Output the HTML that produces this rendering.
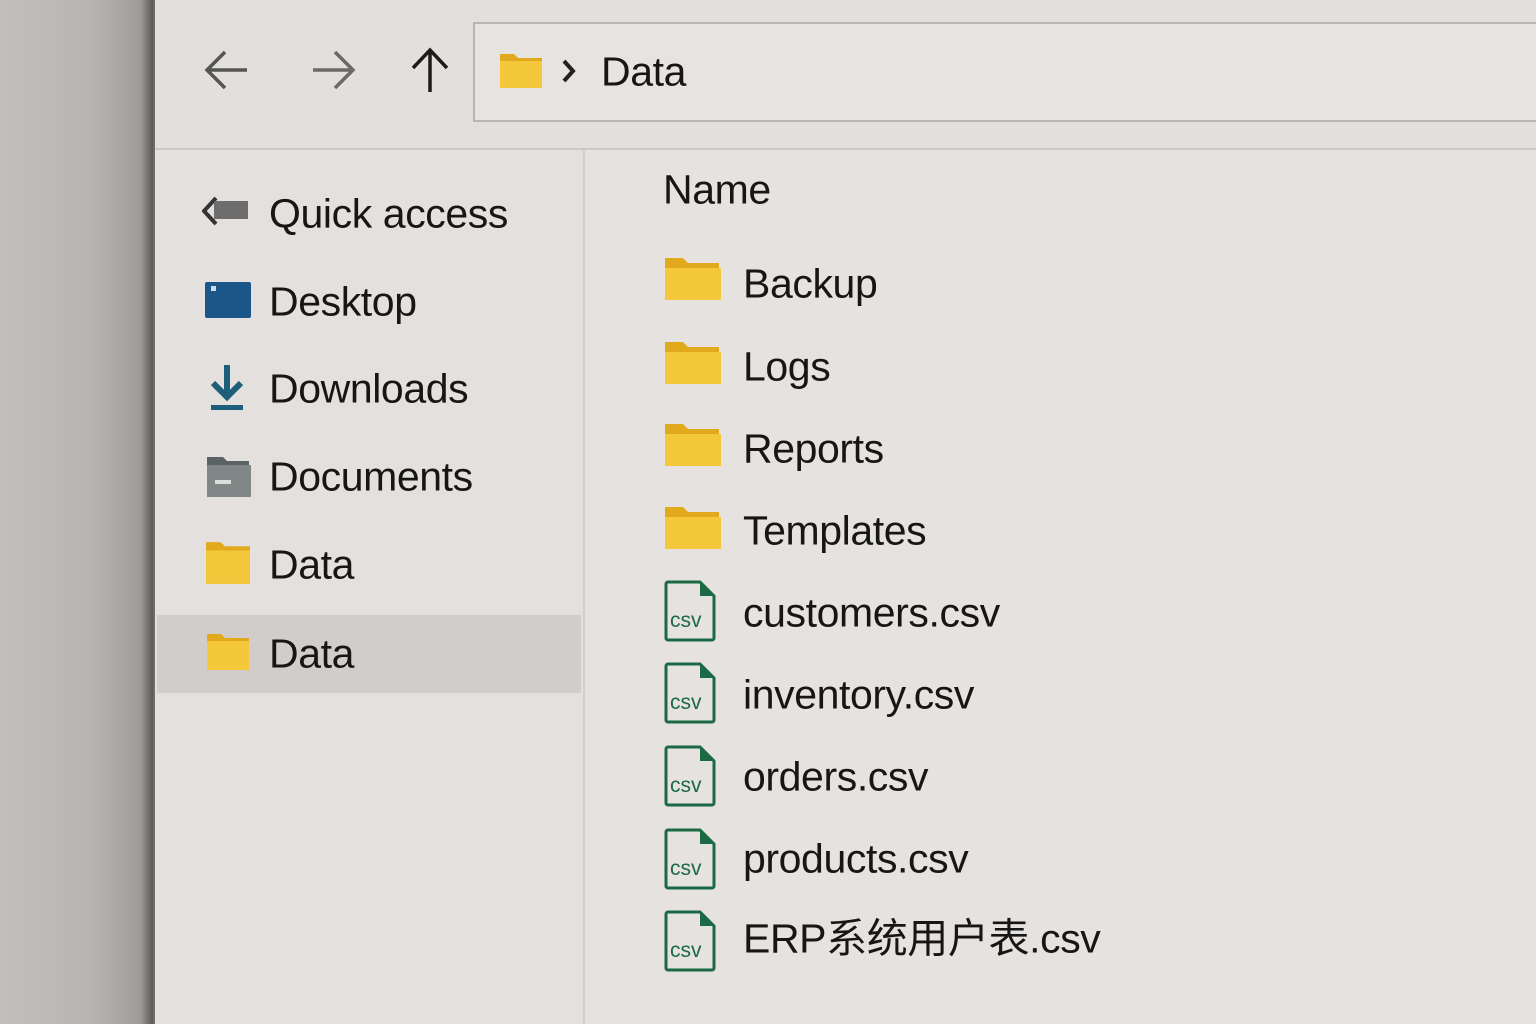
<!DOCTYPE html>
<html><head><meta charset="utf-8"><style>
html,body{margin:0;padding:0;width:1536px;height:1024px;overflow:hidden;background:#b9b7b3;}
body{position:relative;font-family:"Liberation Sans","Noto Sans CJK SC",sans-serif;color:#161616;}
.bezel{position:absolute;left:0;top:0;width:153px;height:1024px;background:linear-gradient(90deg,#c2c0bc 0%,#b7b5b1 60%,#9e9c98 92%,#5a5856 100%);}
.win{position:absolute;left:153px;top:0;right:0;bottom:0;background:#e5e2df;border-left:2px solid #6f6d6a;}
.tb{position:absolute;left:0;top:0;right:0;height:148px;background:#e2dfdc;border-bottom:2px solid #cbc8c5;}
.addr{position:absolute;left:318px;top:22px;right:-4px;height:96px;border:2px solid #b8b5b2;border-right:none;background:#e6e3e0;}
.side{position:absolute;left:0;top:150px;width:428px;bottom:0;border-right:2px solid #d2cfcc;background:#e3e0dd;}
.sel{position:absolute;left:2px;top:465px;width:424px;height:78px;background:#d0cdca;}
.t{position:absolute;font-size:41px;line-height:1;white-space:nowrap;transform:translateY(-50%);letter-spacing:-0.4px;}
.ic{position:absolute;}
</style></head><body>
<div class="bezel"></div>
<div class="win">
 <div class="tb">
  <svg class="ic" style="left:48px;top:48px" width="48" height="44" viewBox="0 0 48 44"><path d="M44 22H4M22 4L4 22l18 18" fill="none" stroke="#555" stroke-width="3.5"/></svg>
  <svg class="ic" style="left:154px;top:48px" width="48" height="44" viewBox="0 0 48 44"><path d="M4 22h40M26 4l18 18-18 18" fill="none" stroke="#6a6a6a" stroke-width="3.5"/></svg>
  <svg class="ic" style="left:254px;top:46px" width="42" height="48" viewBox="0 0 42 48"><path d="M21 46V4M4 22L21 4l17 18" fill="none" stroke="#1c1c1c" stroke-width="3.5"/></svg>
  <div class="addr"></div>
  <svg class="ic" style="left:343px;top:50px" width="46" height="40" viewBox="0 0 46 40"><path d="M2 4h14l4 4h24v30H2z" fill="#e2a91c"/><rect x="2" y="11" width="42" height="27" fill="#f5c83b"/></svg>
  <svg class="ic" style="left:406px;top:58px" width="16" height="26" viewBox="0 0 16 26"><path d="M3 3l9 10-9 10" fill="none" stroke="#222" stroke-width="4"/></svg>
  <div class="t" style="left:446px;top:72px">Data</div>
 </div>
 <div class="side">
  <div class="sel"></div>
 </div>
 <svg class="ic" style="left:47px;top:196px" width="48" height="30" viewBox="0 0 48 30"><path d="M14 2L2 15l12 13" fill="none" stroke="#333" stroke-width="4"/><rect x="12" y="5" width="34" height="18" fill="#6d6d6d"/></svg>
 <svg class="ic" style="left:50px;top:282px" width="46" height="36" viewBox="0 0 46 36"><rect width="46" height="36" rx="2" fill="#1a5788"/><rect x="6" y="4" width="5" height="5" fill="#cde"/></svg>
 <svg class="ic" style="left:52px;top:363px" width="40" height="50" viewBox="0 0 40 50"><path d="M20 2v30M6 20l14 14 14-14" fill="none" stroke="#1d5f7a" stroke-width="6"/><rect x="4" y="42" width="32" height="5" fill="#1d5f7a"/></svg>
 <svg class="ic" style="left:50px;top:455px" width="46" height="42" viewBox="0 0 46 42"><path d="M2 2h16l4 4h22v34H2z" fill="#5b6263"/><rect x="2" y="10" width="44" height="32" fill="#7f8787"/><rect x="10" y="25" width="16" height="4" fill="#ddd"/></svg>
 <svg class="ic" style="left:49px;top:540px" width="48" height="46" viewBox="0 0 46 44"><path d="M2 2h14l4 4h24v36H2z" fill="#e2a91c"/><rect x="2" y="10" width="42" height="32" fill="#f5c83b"/></svg>
 <svg class="ic" style="left:49px;top:632px" width="48" height="40" viewBox="0 0 46 40"><path d="M2 2h14l4 4h24v32H2z" fill="#e2a91c"/><rect x="2" y="9" width="42" height="29" fill="#f5c83b"/></svg>
 <div class="t" style="left:114px;top:214px">Quick access</div>
 <div class="t" style="left:114px;top:302px">Desktop</div>
 <div class="t" style="left:114px;top:389px">Downloads</div>
 <div class="t" style="left:114px;top:477px">Documents</div>
 <div class="t" style="left:114px;top:565px">Data</div>
 <div class="t" style="left:114px;top:654px">Data</div>
 <div class="t" style="left:508px;top:190px">Name</div>
 <svg class="ic" style="left:508px;top:256px" width="58" height="46" viewBox="0 0 58 46"><path d="M2 2h18l5 5h31v37H2z" fill="#e2a91c"/><rect x="2" y="12" width="56" height="32" fill="#f5c83b"/></svg>
 <svg class="ic" style="left:508px;top:340px" width="58" height="46" viewBox="0 0 58 46"><path d="M2 2h18l5 5h31v37H2z" fill="#e2a91c"/><rect x="2" y="12" width="56" height="32" fill="#f5c83b"/></svg>
 <svg class="ic" style="left:508px;top:422px" width="58" height="46" viewBox="0 0 58 46"><path d="M2 2h18l5 5h31v37H2z" fill="#e2a91c"/><rect x="2" y="12" width="56" height="32" fill="#f5c83b"/></svg>
 <svg class="ic" style="left:508px;top:505px" width="58" height="46" viewBox="0 0 58 46"><path d="M2 2h18l5 5h31v37H2z" fill="#e2a91c"/><rect x="2" y="12" width="56" height="32" fill="#f5c83b"/></svg>
 <div class="t" style="left:588px;top:284px">Backup</div>
 <div class="t" style="left:588px;top:367px">Logs</div>
 <div class="t" style="left:588px;top:449px">Reports</div>
 <div class="t" style="left:588px;top:531px">Templates</div>
 <svg width="0" height="0" style="position:absolute"><defs><g id="csv"><path d="M4 2h32l14 14v42a2 2 0 0 1-2 2H4a2 2 0 0 1-2-2V4a2 2 0 0 1 2-2z" fill="none" stroke="#1c6a45" stroke-width="3"/><path d="M36 2v14h14z" fill="#1c6a45"/><text x="6" y="47" font-family="Liberation Sans,sans-serif" font-size="21" fill="#1c6a45">csv</text></g></defs></svg>
 <svg class="ic" style="left:509px;top:580px" width="54" height="62"><use href="#csv"/></svg>
 <svg class="ic" style="left:509px;top:662px" width="54" height="62"><use href="#csv"/></svg>
 <svg class="ic" style="left:509px;top:745px" width="54" height="62"><use href="#csv"/></svg>
 <svg class="ic" style="left:509px;top:828px" width="54" height="62"><use href="#csv"/></svg>
 <svg class="ic" style="left:509px;top:910px" width="54" height="62"><use href="#csv"/></svg>
 <div class="t" style="left:588px;top:613px">customers.csv</div>
 <div class="t" style="left:588px;top:695px">inventory.csv</div>
 <div class="t" style="left:588px;top:777px">orders.csv</div>
 <div class="t" style="left:588px;top:859px">products.csv</div>
 <div class="t" style="left:588px;top:939px">ERP系统用户表.csv</div>
</div>
</body></html>
